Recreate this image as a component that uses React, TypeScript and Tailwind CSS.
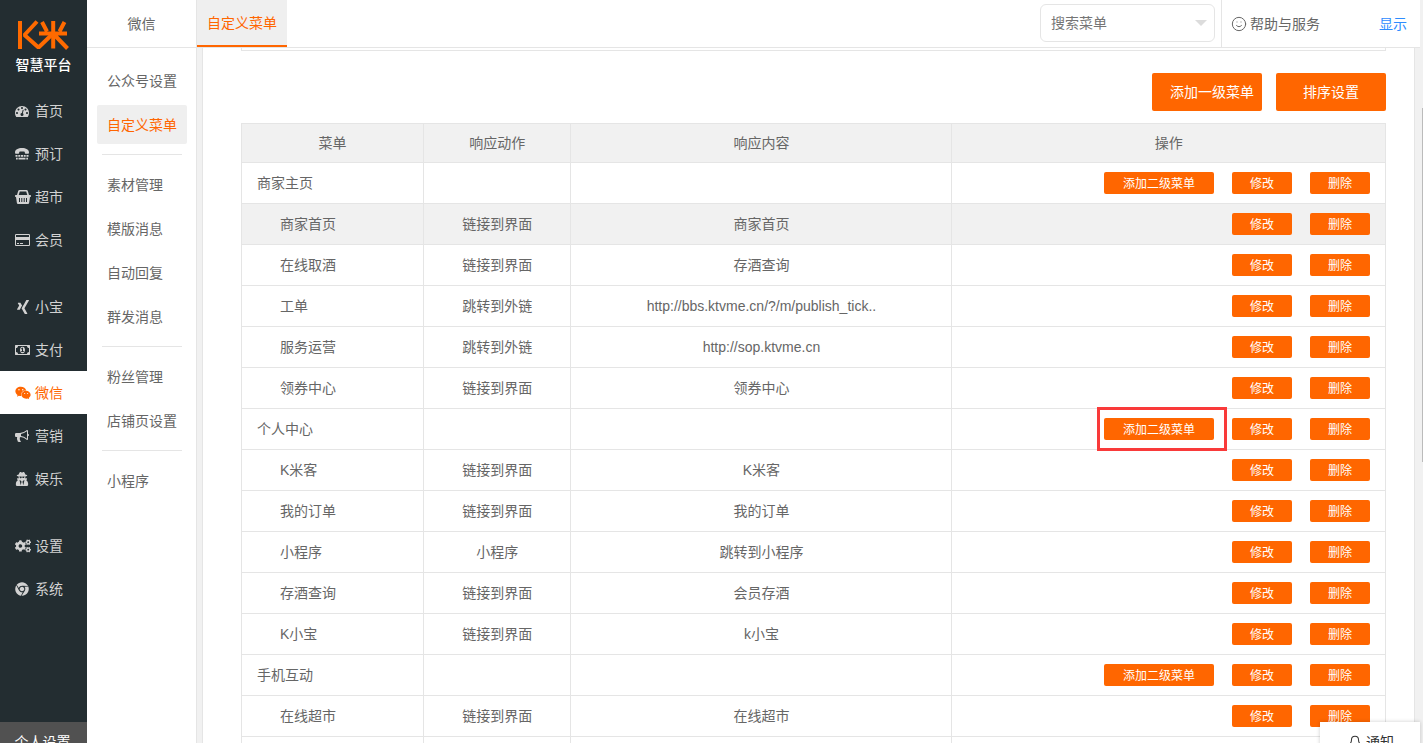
import type { ReactNode } from 'react';
import { FaChrome, FaCogs, FaUserSecret, FaWeixin, FaXing } from 'react-icons/fa';
import { Bell, Smile } from 'lucide-react';

type NavItem = { label: string; icon: ReactNode; active?: boolean };

const glyph = 'h-[14px] w-auto fill-current';
const glyphLg = 'h-4 w-auto fill-current';

function DashboardIcon() {
  return (
    <svg viewBox="0 0 1792 1792" className={glyph}>
      <path d="M384 1152q0-53-37.5-90.5t-90.5-37.5-90.5 37.5-37.5 90.5 37.5 90.5 90.5 37.5 90.5-37.5 37.5-90.5zm192-448q0-53-37.5-90.5t-90.5-37.5-90.5 37.5-37.5 90.5 37.5 90.5 90.5 37.5 90.5-37.5 37.5-90.5zm428 481l101-382q6-26-7.5-48.5t-38.5-29.5-48 6.5-30 39.5l-101 382q-60 5-107 43.5t-63 98.5q-20 77 20 146t117 89 146-20 89-117q16-60-6-117t-72-91zm660-33q0-53-37.5-90.5t-90.5-37.5-90.5 37.5-37.5 90.5 37.5 90.5 90.5 37.5 90.5-37.5 37.5-90.5zm-640-640q0-53-37.5-90.5t-90.5-37.5-90.5 37.5-37.5 90.5 37.5 90.5 90.5 37.5 90.5-37.5 37.5-90.5zm448 192q0-53-37.5-90.5t-90.5-37.5-90.5 37.5-37.5 90.5 37.5 90.5 90.5 37.5 90.5-37.5 37.5-90.5zm320 448q0 261-141 483-19 29-54 29h-1402q-35 0-54-29-141-221-141-483 0-182 71-348t191-286 286-191 348-71 348 71 286 191 191 286 71 348z" />
    </svg>
  );
}

function TtyIcon() {
  return (
    <svg viewBox="0 0 14 14" className={glyph}>
      <path d="M0 5.500C0 2.500 3 1 7 1s7 1.500 7 4.500c0 .8-.4 1.300-1 1.300h-2c-.7 0-1.200-.4-1.200-1.100V4.800C9 4.400 5 4.400 4.200 4.800v.900c0 .7-.5 1.100-1.200 1.100H1c-.6 0-1-.500-1-1.300z" />
      <path d="M.5 8h2v1.700h-2zM3.300 8h2v1.700h-2zM6 8h2v1.700H6zM8.700 8h2v1.700h-2zM11.500 8h2v1.700h-2zM1 10.800h1.700v1.700H1zM3.500 10.800h7v1.700h-7zM11.300 10.800H13v1.700h-1.700z" />
    </svg>
  );
}

function BasketIcon() {
  return (
    <svg viewBox="0 0 16 14" className={glyph}>
      <path
        fillRule="evenodd"
        d="M4.600 0h6.800c.8 0 1.300.4 1.500 1.200L14 5h1.300c.4 0 .7.300.7.700v.6c0 .4-.3.700-.7.700H15l-.9 6c-.1.600-.5 1-1.100 1H3c-.6 0-1-.4-1.100-1L1 7H.7C.3 7 0 6.700 0 6.300v-.6C0 5.300.3 5 .7 5H2l1.100-3.800C3.300.4 3.800 0 4.600 0zm.2 1.500L3.700 5h8.600l-1.100-3.500zM4 8v4h1V8zm2.300 0v4h1V8zm2.400 0v4h1V8zM11 8v4h1V8z"
      />
    </svg>
  );
}

function CardIcon() {
  return (
    <svg viewBox="0 0 1920 1792" className={glyph}>
      <path d="M1760 128q66 0 113 47t47 113v1216q0 66-47 113t-113 47h-1600q-66 0-113-47t-47-113v-1216q0-66 47-113t113-47h1600zm-1600 128q-13 0-22.5 9.5t-9.5 22.5v224h1664v-224q0-13-9.5-22.5t-22.5-9.5h-1600zm1600 1280q13 0 22.5-9.5t9.5-22.5v-608h-1664v608q0 13 9.5 22.5t22.5 9.5h1600zm-1504-128v-128h256v128h-256zm384 0v-128h384v128h-384z" />
    </svg>
  );
}

function MoneyIcon() {
  return (
    <svg viewBox="0 0 1920 1792" className={glyph}>
      <path d="M768 1152h384v-96h-128v-448h-114l-148 137 77 80q42-37 55-57h2v288h-128v96zm512-256q0 70-21 142t-59.5 134-101.5 101-138 39-138-39-101.5-101-59.5-134-21-142 21-142 59.5-134 101.5-101 138-39 138 39 101.5 101 59.5 134 21 142zm512 256v-512q-106 0-181-75t-75-181h-1152q0 106-75 181t-181 75v512q106 0 181 75t75 181h1152q0-106 75-181t181-75zm128-832v1152q0 26-19 45t-45 19h-1792q-26 0-45-19t-19-45v-1152q0-26 19-45t45-19h1792q26 0 45 19t19 45z" />
    </svg>
  );
}

function BullhornIcon() {
  return (
    <svg viewBox="0 0 1792 1792" className={glyph}>
      <path d="M1664 640q53 0 90.5 37.5t37.5 90.5-37.5 90.5-90.5 37.5v384q0 52-38 90t-90 38q-417-347-812-380-58 19-91 66t-31 100.5 40 92.5q-20 33-23 65.5t6 58 33.5 55 48 50 61.5 50.5q-29 58-111.5 83t-168.5 11.5-132-55.5q-7-23-29.5-87.5t-32-94.5-23-89-15-101 3.5-98.5 22-110.5h-122q-66 0-113-47t-47-113v-192q0-66 47-113t113-47h480q435 0 896-384 52 0 90 38t38 90v384zm-128 604v-954q-394 302-768 343v270q377 42 768 341z" />
    </svg>
  );
}

const navGroups: NavItem[][] = [
  [
    { label: '首页', icon: <DashboardIcon /> },
    { label: '预订', icon: <TtyIcon /> },
    { label: '超市', icon: <BasketIcon /> },
    { label: '会员', icon: <CardIcon /> },
  ],
  [
    { label: '小宝', icon: <FaXing className={glyphLg} /> },
    { label: '支付', icon: <MoneyIcon /> },
    { label: '微信', icon: <FaWeixin className={glyphLg} />, active: true },
    { label: '营销', icon: <BullhornIcon /> },
    { label: '娱乐', icon: <FaUserSecret className={glyph} /> },
  ],
  [
    { label: '设置', icon: <FaCogs className={glyphLg} /> },
    { label: '系统', icon: <FaChrome className={glyph} /> },
  ],
];

const subGroups = [
  ['公众号设置', '自定义菜单'],
  ['素材管理', '模版消息', '自动回复', '群发消息'],
  ['粉丝管理', '店铺页设置'],
  ['小程序'],
];

type Row = {
  name: string;
  action?: string;
  content?: string;
  top?: boolean;
  hover?: boolean;
  marked?: boolean;
};

const rows: Row[] = [
  { name: '商家主页', top: true },
  { name: '商家首页', action: '链接到界面', content: '商家首页', hover: true },
  { name: '在线取酒', action: '链接到界面', content: '存酒查询' },
  { name: '工单', action: '跳转到外链', content: 'http://bbs.ktvme.cn/?/m/publish_tick..' },
  { name: '服务运营', action: '跳转到外链', content: 'http://sop.ktvme.cn' },
  { name: '领券中心', action: '链接到界面', content: '领券中心' },
  { name: '个人中心', top: true, marked: true },
  { name: 'K米客', action: '链接到界面', content: 'K米客' },
  { name: '我的订单', action: '链接到界面', content: '我的订单' },
  { name: '小程序', action: '小程序', content: '跳转到小程序' },
  { name: '存酒查询', action: '链接到界面', content: '会员存酒' },
  { name: 'K小宝', action: '链接到界面', content: 'k小宝' },
  { name: '手机互动', top: true },
  { name: '在线超市', action: '链接到界面', content: '在线超市' },
];

function Logo() {
  return (
    <div className="flex h-[89px] shrink-0 flex-col items-center pt-5">
      <svg viewBox="0 0 52 30" className="h-[30px] w-[52px]" fill="none" stroke="#ff6a00" strokeWidth="4">
        <path d="M2 1v28" />
        <path d="M19 1.500L6.500 15l14 12.500L34 14.500" strokeLinejoin="bevel" />
        <path d="M21 13.500h28M35.200 1v27.500M24 2l5 9.500M46.500 2l-5 9.500M37 15.500l12.500 13" />
      </svg>
      <span className="mt-[6px] text-sm font-medium leading-[18px] text-white">智慧平台</span>
    </div>
  );
}

function Sidebar() {
  return (
    <aside className="flex w-[87px] shrink-0 flex-col bg-[#232d31] text-[#d2d2d2]">
      <Logo />
      <nav className="flex flex-1 flex-col gap-6">
        {navGroups.map((group) => (
          <ul key={group[0].label}>
            {group.map((item) => (
              <li key={item.label}>
                <a
                  href="#"
                  className={`flex h-[43px] items-center pl-[15px] ${item.active ? 'bg-white text-[#ff6600]' : ''}`}
                >
                  <span className="flex w-5 items-center">{item.icon}</span>
                  {item.label}
                </a>
              </li>
            ))}
          </ul>
        ))}
      </nav>
      <button className="-mb-[18px] h-[39px] shrink-0 bg-[#515151] pr-[2px] text-white">个人设置</button>
    </aside>
  );
}

function SubMenu() {
  return (
    <aside className="w-[110px] shrink-0 border-r border-[#e5e5e5] bg-white">
      <h2 className="flex h-12 items-center justify-center border-b border-[#e5e5e5]">微信</h2>
      <nav className="pl-[10px] pr-[9px] pt-[13px]">
        {subGroups.map((group, i) => (
          <ul
            key={group[0]}
            className={`flex flex-col gap-[5px] ${i ? "before:mx-[5px] before:mb-[5px] before:mt-[10px] before:h-px before:bg-[#e5e5e5] before:content-['']" : ''}`}
          >
            {group.map((label) => (
              <li key={label}>
                <a
                  href="#"
                  className={`flex h-[39px] items-center rounded-[2px] pl-[10px] ${
                    label === '自定义菜单' ? 'bg-[#efefef] text-[#ff6600]' : ''
                  }`}
                >
                  {label}
                </a>
              </li>
            ))}
          </ul>
        ))}
      </nav>
    </aside>
  );
}

function Topbar() {
  return (
    <header className="mr-[3px] flex h-12 shrink-0 items-stretch border-b border-[#e5e5e5] bg-white">
      <button className="h-[47px] w-[90px] border-b-2 border-[#ff6600] bg-[#efefef] text-[#ff6600]">自定义菜单</button>
      <div className="relative ml-auto mt-1 h-[38px] w-[175px]">
        <select
          aria-label="搜索菜单"
          className="h-full w-full appearance-none rounded-md border border-[#e5e5e5] bg-white pl-[10px] text-[#757575]"
        >
          <option>搜索菜单</option>
        </select>
        <span className="pointer-events-none absolute right-2 top-4 border-x-[6px] border-t-[6px] border-x-transparent border-t-[#dcdcdc]" />
      </div>
      <div className="ml-[6px] flex items-center border-l border-[#e5e5e5] pl-[9px]">
        <a href="#" className="flex items-center gap-[3px] whitespace-nowrap">
          <Smile className="h-4 w-4" strokeWidth={1.5} />
          帮助与服务
        </a>
        <a href="#" className="ml-[59px] mr-[13px] whitespace-nowrap text-[#2d8cff]">显示</a>
      </div>
    </header>
  );
}

function Op({ label, wide }: { label: string; wide?: boolean }) {
  return (
    <button
      className={`block h-[22px] rounded-[2px] bg-[#ff6600] pt-px text-xs text-white ${wide ? 'w-[110px]' : 'w-[60px]'}`}
    >
      {label}
    </button>
  );
}

function MenuTable() {
  return (
    <table className="mt-3 w-full table-fixed border-collapse text-center [&_td]:border [&_td]:border-[#e5e5e5] [&_th]:border [&_th]:border-[#e5e5e5]">
      <colgroup>
        <col className="w-[15.9%]" />
        <col className="w-[12.9%]" />
        <col className="w-[33.3%]" />
        <col />
      </colgroup>
      <thead>
        <tr className="h-[39px] bg-[#f1f1f1] [&_th]:font-normal">
          <th>菜单</th>
          <th>响应动作</th>
          <th>响应内容</th>
          <th>操作</th>
        </tr>
      </thead>
      <tbody>
        {rows.map((row) => (
          <tr key={row.name} className={`h-[41px] ${row.hover ? 'bg-[#f1f1f1]' : ''}`}>
            <td className={`text-left ${row.top ? 'pl-[15px]' : 'pl-[38px]'}`}>{row.name}</td>
            <td>{row.action}</td>
            <td>{row.content}</td>
            <td>
              <div className="flex justify-end gap-[18px] pr-[15px]">
                {row.top && (
                  <div className="relative">
                    <Op label="添加二级菜单" wide />
                    {row.marked && (
                      <span className="pointer-events-none absolute -bottom-[11px] -left-[7px] -right-[13px] -top-[11px] border-[3px] border-[#f93a3a]" />
                    )}
                  </div>
                )}
                <Op label="修改" />
                <Op label="删除" />
              </div>
            </td>
          </tr>
        ))}
        <tr className="h-[41px]">
          <td />
          <td />
          <td />
          <td />
        </tr>
      </tbody>
    </table>
  );
}

export default function App() {
  return (
    <div className="flex h-screen overflow-hidden bg-[#f1f1f1] font-['Liberation_Sans','Noto_Sans_CJK_SC',sans-serif] text-sm text-[#666]">
      <Sidebar />
      <SubMenu />
      <div className="relative flex min-w-0 flex-1 flex-col">
        <Topbar />
        <main className="ml-[5px] mr-2 min-h-0 flex-1 overflow-hidden border-x border-[#e5e5e5] bg-white pl-[38px] pr-7">
          <div className="h-[3px] border border-t-0 border-[#e5e5e5]" />
          <div className="mt-[22px] flex justify-end gap-[14px] text-white">
            <button className="h-[38px] w-[110px] whitespace-nowrap rounded-[2px] bg-[#ff6600] pl-[10px]">添加一级菜单</button>
            <button className="h-[38px] w-[110px] rounded-[2px] bg-[#ff6600]">排序设置</button>
          </div>
          <MenuTable />
        </main>
        <span className="absolute right-0 top-[108px] h-[354px] w-px bg-[#bbb]" />
        <button className="absolute -bottom-[18px] right-[3px] flex h-[39px] w-[100px] items-center justify-center gap-1 bg-white pl-[2px] text-[#333] shadow-[0_0_4px_rgba(0,0,0,0.2)]">
          <Bell className="h-[14px] w-[14px]" strokeWidth={1.75} />
          通知
        </button>
      </div>
    </div>
  );
}
